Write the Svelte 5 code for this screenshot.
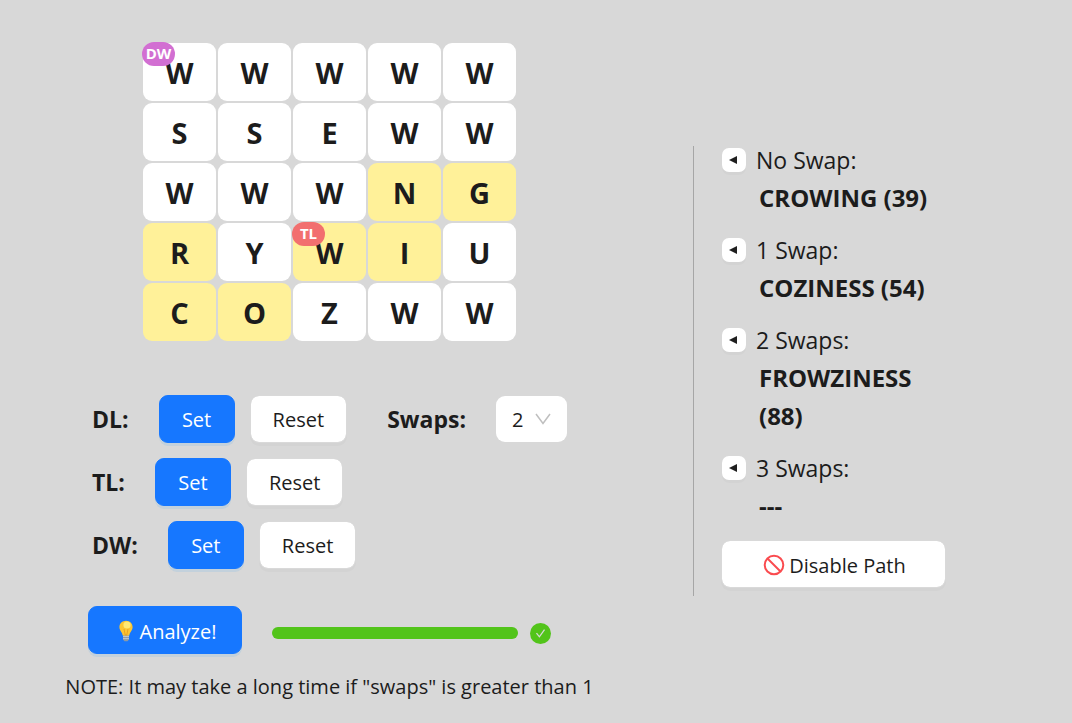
<script>
  const rows = ['WWWWW', 'SSEWW', 'WWWNG', 'RYWIU', 'COZWW'];
  const path = new Set(['4-0', '4-1', '3-0', '3-2', '3-3', '2-3', '2-4']);
  const badges = { '0-0': 'DW', '3-2': 'TL' };
  const modifiers = ['DL', 'TL', 'DW'];
  const results = [
    { title: 'No Swap:', word: 'CROWING (39)' },
    { title: '1 Swap:', word: 'COZINESS (54)' },
    { title: '2 Swaps:', word: 'FROWZINESS (88)' },
    { title: '3 Swaps:', word: '---' }
  ];
  let swaps = $state('2');
</script>

<main>
  <section class="left">
    <div class="board">
      {#each rows as row, r}
        {#each row.split('') as letter, c}
          <div class="cell" class:lit={path.has(`${r}-${c}`)}>
            {letter}
            {#if badges[`${r}-${c}`]}
              <span class="badge {badges[`${r}-${c}`].toLowerCase()}">{badges[`${r}-${c}`]}</span>
            {/if}
          </div>
        {/each}
      {/each}
    </div>

    <div class="controls">
      {#each modifiers as m, i}
        <div class="row">
          <span class="name" id="mod-{m}">{m}:</span>
          <div class="pair" role="group" aria-labelledby="mod-{m}">
            <button class="btn primary">Set</button>
            <button class="btn">Reset</button>
          </div>
          {#if i === 0}
            <div class="swaps">
              <label class="name" for="swaps">Swaps:</label>
              <div class="select">
                <select id="swaps" bind:value={swaps}>
                  <option>0</option>
                  <option>1</option>
                  <option>2</option>
                  <option>3</option>
                </select>
                <svg viewBox="0 0 16 12" width="16" height="12" aria-hidden="true">
                  <path d="M1 1 L8 10.5 L15 1" fill="none" stroke="#bfbfbf" stroke-width="1.5" />
                </svg>
              </div>
            </div>
          {/if}
        </div>
      {/each}
    </div>

    <div class="run">
      <button class="btn primary analyze">
        <svg viewBox="0 0 16 22" width="16" height="22" aria-hidden="true">
          <path d="M5 15h6v4.5l-1.5 1.8h-3L5 19.5z" fill="#8d9aa5" />
          <path d="M5 16.5h6M5 18.6h6" stroke="#c9d1d6" stroke-width="0.8" />
          <path d="M8 .8c-3.8 0-6.6 2.8-6.6 6.3 0 3.7 2.8 4.8 3.3 8.4h6.6c.5-3.6 3.3-4.7 3.3-8.4C14.600 3.600 11.800.8 8 .8z" fill="#fcc632" />
          <circle cx="9" cy="5" r="3.600" fill="#ffea75" />
          <path d="M6 9l1.200 6h1.600l1.200-6" fill="none" stroke="#e59a1f" stroke-width="0.8" />
        </svg>
        Analyze!
      </button>
      <div class="track" role="progressbar" aria-label="Analysis" aria-valuenow="100" aria-valuemin="0" aria-valuemax="100">
        <div class="bar" style="width: 100%"></div>
      </div>
      <svg class="done" viewBox="0 0 21 21" width="21" height="21" aria-hidden="true">
        <circle cx="10.500" cy="10.500" r="10.500" fill="#52c41a" />
        <path d="M6.500 10.200 L9.400 13.800 L14.500 6.700" fill="none" stroke="#d8d8d8" stroke-width="1.300" />
      </svg>
    </div>

    <p class="note">NOTE: It may take a long time if "swaps" is greater than 1</p>
  </section>

  <section class="right">
    <div class="divider"></div>
    <div class="panel">
      {#each results as item}
        <div class="result">
          <div class="title">
            <button class="arrow" aria-label="Show {item.title}">
              <svg viewBox="0 0 8 8" width="8" height="8"><path d="M0 4 L8 0 V8z" fill="#1f1f1f" /></svg>
            </button>
            <span>{item.title}</span>
          </div>
          <div class="word">{item.word}</div>
        </div>
      {/each}
      <button class="btn disable">
        <svg viewBox="0 0 22 22" width="22" height="22" aria-hidden="true">
          <circle cx="11" cy="11" r="9.300" fill="none" stroke="#fa4b4f" stroke-width="2" />
          <path d="M4.500 4.500 L17.500 17.500" stroke="#fa4b4f" stroke-width="2" />
        </svg>
        Disable Path
      </button>
    </div>
  </section>
</main>

<style>
  :global(body) {
    margin: 0;
    background: #d8d8d8;
  }
  main {
    display: grid;
    grid-template-columns: 659fr 413fr;
    padding: 43px 0 23px;
    color: #1c1c1c;
    font-family: 'Open Sans', 'Noto Sans', sans-serif;
    font-size: 20px;
  }
  .left {
    display: flex;
    flex-direction: column;
    align-items: center;
  }
  .board {
    display: grid;
    grid-template-columns: repeat(5, 73px);
    grid-auto-rows: 58px;
    gap: 2px;
  }
  .cell {
    position: relative;
    display: flex;
    align-items: center;
    justify-content: center;
    border-radius: 9px;
    background: #fff;
    font-size: 29px;
    font-weight: 700;
  }
  .cell.lit {
    background: #fff199;
  }
  .badge {
    position: absolute;
    top: -1px;
    left: -1px;
    width: 33px;
    height: 24px;
    border-radius: 12px;
    color: #fff;
    font-size: 15px;
    line-height: 22px;
    text-align: center;
  }
  .badge.dw {
    background: #d26fd2;
  }
  .badge.tl {
    background: #f26f6f;
  }
  .controls {
    display: flex;
    flex-direction: column;
    gap: 15px;
    width: 475px;
    margin-top: 54px;
  }
  .row,
  .swaps {
    display: flex;
    align-items: center;
    gap: 30px;
  }
  .swaps {
    margin-left: auto;
  }
  .pair {
    display: flex;
    gap: 15px;
  }
  .name {
    font-size: 23px;
    font-weight: 700;
    line-height: 36px;
  }
  .btn {
    display: flex;
    align-items: center;
    justify-content: center;
    box-sizing: border-box;
    height: 48px;
    min-width: 97px;
    padding: 0 22px;
    border: 1px solid #d9d9d9;
    border-radius: 9px;
    background: #fff;
    background-clip: padding-box;
    box-shadow: 0 3px 0 rgba(0, 0, 0, 0.02);
    color: #1c1c1c;
    font: inherit;
    white-space: nowrap;
  }
  .btn.primary {
    min-width: 76px;
    border-color: #1677ff;
    background: #1677ff;
    box-shadow: 0 3px 0 rgba(5, 145, 255, 0.1);
    color: #fff;
  }
  .select {
    display: grid;
    align-items: center;
    box-sizing: border-box;
    width: 71px;
  }
  .select select,
  .select svg {
    grid-area: 1 / 1;
  }
  .select select {
    width: 100%;
    height: 46px;
    padding: 0 16px;
    border: 0;
    border-radius: 9px;
    appearance: none;
    background: #fff;
    color: #1c1c1c;
    font: inherit;
  }
  .select svg {
    justify-self: end;
    margin-right: 16px;
    pointer-events: none;
  }
  .run {
    display: flex;
    align-items: center;
    box-sizing: border-box;
    width: 527px;
    margin-top: 37px;
    padding: 0 42px 0 22px;
  }
  .btn.analyze {
    gap: 6px;
    width: 154px;
    padding: 2px 18px 0 22px;
  }
  .track {
    flex: 1;
    height: 12px;
    margin: 6px 12px 0 30px;
    border-radius: 6px;
    background: #cecece;
  }
  .bar {
    height: 100%;
    border-radius: 6px;
    background: #52c41a;
  }
  .done {
    margin-top: 6px;
  }
  .note {
    margin: 21px 0 0;
    line-height: 24px;
    white-space: nowrap;
  }
  .right {
    display: flex;
    align-self: center;
    padding-left: 34px;
  }
  .divider {
    width: 1px;
    margin: 4px 27px 4px 0;
    background: #a6a6a6;
  }
  .panel {
    display: flex;
    flex-direction: column;
    gap: 15px;
    width: 225px;
    padding-bottom: 12px;
  }
  .title {
    display: flex;
    align-items: center;
    gap: 10px;
    padding: 0 0 1px 1px;
    font-size: 23px;
    line-height: 36px;
  }
  .arrow {
    display: grid;
    place-items: center;
    width: 24px;
    height: 24px;
    padding: 0 2px 0 0;
    border: 0;
    border-radius: 7px;
    background: #fff;
    box-shadow: 0 3px 0 rgba(0, 0, 0, 0.02);
  }
  .word {
    padding-left: 38px;
    font-size: 24px;
    font-weight: 700;
    line-height: 38px;
  }
  .btn.disable {
    gap: 4px;
    width: 100%;
    padding: 2px 20px 0 22px;
  }
</style>
